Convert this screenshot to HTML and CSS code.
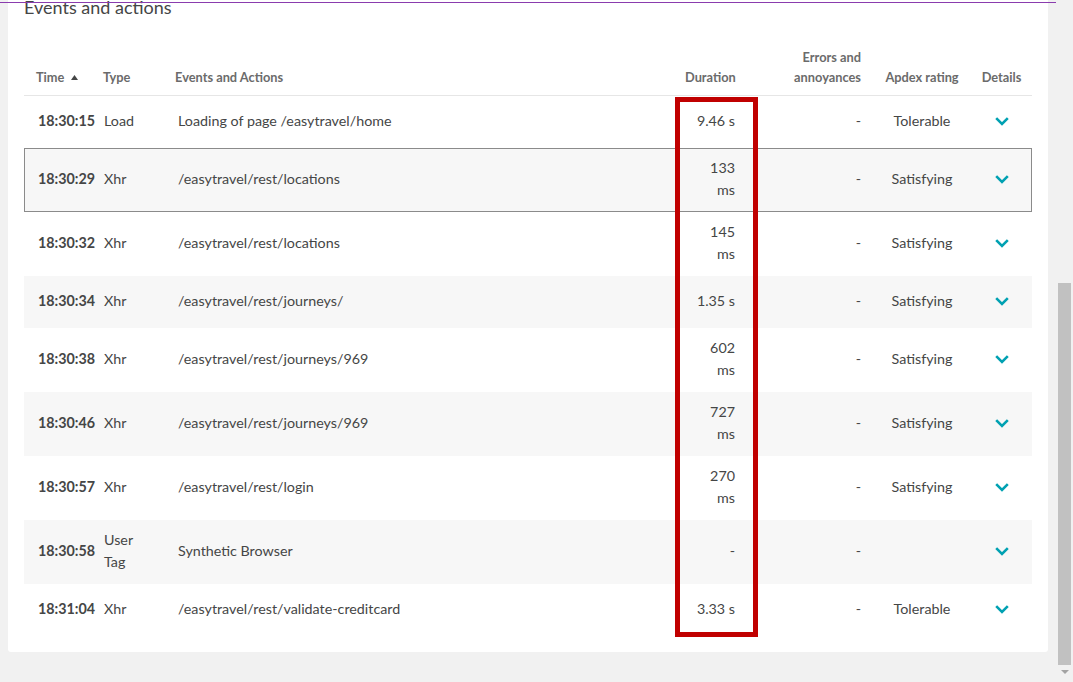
FILE: index.html
```html
<!DOCTYPE html>
<html lang="en">
<head>
<meta charset="utf-8">
<title>Events and actions</title>
<link rel="stylesheet" href="styles.css">
</head>
<body>
<div class="main">
  <div class="topline"></div>
  <section class="card">
    <h2 class="title">Events and actions</h2>
    <div class="table">
      <div class="thead">
        <div class="c time">Time <svg class="sort" width="7" height="5" viewBox="0 0 7 5"><path d="M0 5 L3.5 0 L7 5 Z" fill="#454646"/></svg></div>
        <div class="c type">Type</div>
        <div class="c events">Events and Actions</div>
        <div class="c dur">Duration</div>
        <div class="c err">Errors and<br>annoyances</div>
        <div class="c apdex">Apdex rating</div>
        <div class="c det">Details</div>
      </div>

      <div class="row">
        <div class="c time">18:30:15</div>
        <div class="c type">Load</div>
        <div class="c events">Loading of page /easytravel/home</div>
        <div class="c dur">9.46 s</div>
        <div class="c err">-</div>
        <div class="c apdex">Tolerable</div>
        <div class="c det"><svg class="chev" width="14" height="9" viewBox="0 0 14 9"><path d="M1.2 1.2 L7 7 L12.8 1.2" fill="none" stroke="#00a1b2" stroke-width="2.6"/></svg></div>
      </div>
      <div class="row alt hover">
        <div class="c time">18:30:29</div>
        <div class="c type">Xhr</div>
        <div class="c events">/easytravel/rest/locations</div>
        <div class="c dur">133 ms</div>
        <div class="c err">-</div>
        <div class="c apdex">Satisfying</div>
        <div class="c det"><svg class="chev" width="14" height="9" viewBox="0 0 14 9"><path d="M1.2 1.2 L7 7 L12.8 1.2" fill="none" stroke="#00a1b2" stroke-width="2.6"/></svg></div>
      </div>
      <div class="row">
        <div class="c time">18:30:32</div>
        <div class="c type">Xhr</div>
        <div class="c events">/easytravel/rest/locations</div>
        <div class="c dur">145 ms</div>
        <div class="c err">-</div>
        <div class="c apdex">Satisfying</div>
        <div class="c det"><svg class="chev" width="14" height="9" viewBox="0 0 14 9"><path d="M1.2 1.2 L7 7 L12.8 1.2" fill="none" stroke="#00a1b2" stroke-width="2.6"/></svg></div>
      </div>
      <div class="row alt">
        <div class="c time">18:30:34</div>
        <div class="c type">Xhr</div>
        <div class="c events">/easytravel/rest/journeys/</div>
        <div class="c dur">1.35 s</div>
        <div class="c err">-</div>
        <div class="c apdex">Satisfying</div>
        <div class="c det"><svg class="chev" width="14" height="9" viewBox="0 0 14 9"><path d="M1.2 1.2 L7 7 L12.8 1.2" fill="none" stroke="#00a1b2" stroke-width="2.6"/></svg></div>
      </div>
      <div class="row">
        <div class="c time">18:30:38</div>
        <div class="c type">Xhr</div>
        <div class="c events">/easytravel/rest/journeys/969</div>
        <div class="c dur">602 ms</div>
        <div class="c err">-</div>
        <div class="c apdex">Satisfying</div>
        <div class="c det"><svg class="chev" width="14" height="9" viewBox="0 0 14 9"><path d="M1.2 1.2 L7 7 L12.8 1.2" fill="none" stroke="#00a1b2" stroke-width="2.6"/></svg></div>
      </div>
      <div class="row alt">
        <div class="c time">18:30:46</div>
        <div class="c type">Xhr</div>
        <div class="c events">/easytravel/rest/journeys/969</div>
        <div class="c dur">727 ms</div>
        <div class="c err">-</div>
        <div class="c apdex">Satisfying</div>
        <div class="c det"><svg class="chev" width="14" height="9" viewBox="0 0 14 9"><path d="M1.2 1.2 L7 7 L12.8 1.2" fill="none" stroke="#00a1b2" stroke-width="2.6"/></svg></div>
      </div>
      <div class="row">
        <div class="c time">18:30:57</div>
        <div class="c type">Xhr</div>
        <div class="c events">/easytravel/rest/login</div>
        <div class="c dur">270 ms</div>
        <div class="c err">-</div>
        <div class="c apdex">Satisfying</div>
        <div class="c det"><svg class="chev" width="14" height="9" viewBox="0 0 14 9"><path d="M1.2 1.2 L7 7 L12.8 1.2" fill="none" stroke="#00a1b2" stroke-width="2.6"/></svg></div>
      </div>
      <div class="row alt">
        <div class="c time">18:30:58</div>
        <div class="c type">User Tag</div>
        <div class="c events">Synthetic Browser</div>
        <div class="c dur">-</div>
        <div class="c err">-</div>
        <div class="c apdex"></div>
        <div class="c det"><svg class="chev" width="14" height="9" viewBox="0 0 14 9"><path d="M1.2 1.2 L7 7 L12.8 1.2" fill="none" stroke="#00a1b2" stroke-width="2.6"/></svg></div>
      </div>
      <div class="row">
        <div class="c time">18:31:04</div>
        <div class="c type">Xhr</div>
        <div class="c events">/easytravel/rest/validate-creditcard</div>
        <div class="c dur">3.33 s</div>
        <div class="c err">-</div>
        <div class="c apdex">Tolerable</div>
        <div class="c det"><svg class="chev" width="14" height="9" viewBox="0 0 14 9"><path d="M1.2 1.2 L7 7 L12.8 1.2" fill="none" stroke="#00a1b2" stroke-width="2.6"/></svg></div>
      </div>
    </div>
  </section>
  <div class="highlight"></div>
</div>
<div class="scrollbar">
  <div class="thumb"></div>
  <div class="arrow"></div>
</div>
</body>
</html>
```

FILE: styles.css
```css
html, body {
  margin: 0;
  padding: 0;
}
body {
  width: 1073px;
  height: 682px;
  overflow: hidden;
  display: flex;
  background: #f1f1f1;
  font-family: Lato, "Liberation Sans", sans-serif;
  color: #454646;
}
.main {
  position: relative;
  width: 1056px;
  flex: none;
  height: 682px;
  overflow: hidden;
  padding: 0 8px;
  box-sizing: border-box;
}
.topline {
  position: absolute;
  left: 0;
  right: 0;
  top: 2px;
  height: 1px;
  background: #8a3cae;
  z-index: 2;
}
.card {
  background: #fff;
  border-radius: 0 0 3px 3px;
  padding: 0 16px 16px;
}
.title {
  margin: -5px 0 0;
  font-size: 18px;
  line-height: 24px;
  font-weight: 400;
  color: #454646;
}
.table {
  margin-top: 20px;
  font-size: 14.3px;
}
.thead {
  display: flex;
  align-items: flex-end;
  border-bottom: 1px solid #e6e6e6;
  padding: 8px 0 8px;
  font-size: 12.8px;
  line-height: 20px;
  font-weight: 700;
  color: #6b6b6b;
}
.row {
  display: flex;
  align-items: center;
  min-height: 52px;
  padding: 9px 0 11px;
  box-sizing: border-box;
  line-height: 22px;
}
.row.alt {
  background: #f7f7f7;
}
.row.hover {
  box-shadow: inset 0 0 0 1px #8b8b8b;
}
.c {
  flex: none;
  box-sizing: border-box;
}
.time { width: 80px; padding-left: 14px; }
.thead .time { padding-left: 12px; }
.row .time { font-weight: 700; }
.type { width: 74px; padding-right: 24px; }
.thead .type { margin-left: -1px; }
.events { flex: 1 1 auto; min-width: 0; }
.thead .events { margin-left: -2px; }
.dur { width: 60px; padding: 0 10px; text-align: right; }
.thead .dur { padding-left: 0; white-space: nowrap; }
.err { width: 126px; padding-right: 10px; text-align: right; }
.apdex { width: 102px; text-align: center; }
.det { width: 59px; text-align: center; }
.thead .det { padding-right: 2px; }
.sort {
  margin-left: 3px;
  vertical-align: 2px;
}
.chev {
  display: block;
  margin: 0 auto;
  position: relative;
  left: -1px;
}
.highlight {
  position: absolute;
  left: 675px;
  top: 97px;
  width: 83px;
  height: 540px;
  box-sizing: border-box;
  border: 5px solid #c00000;
  z-index: 3;
}
.scrollbar {
  width: 17px;
  flex: none;
  height: 682px;
  background: #f1f1f1;
  display: flex;
  flex-direction: column;
  align-items: center;
}
.thumb {
  margin-top: 283px;
  width: 13px;
  height: 382px;
  background: #c1c1c1;
}
.arrow {
  margin-top: 5px;
  width: 0;
  height: 0;
  border-left: 4px solid transparent;
  border-right: 4px solid transparent;
  border-top: 4px solid #a3a3a3;
}
```
